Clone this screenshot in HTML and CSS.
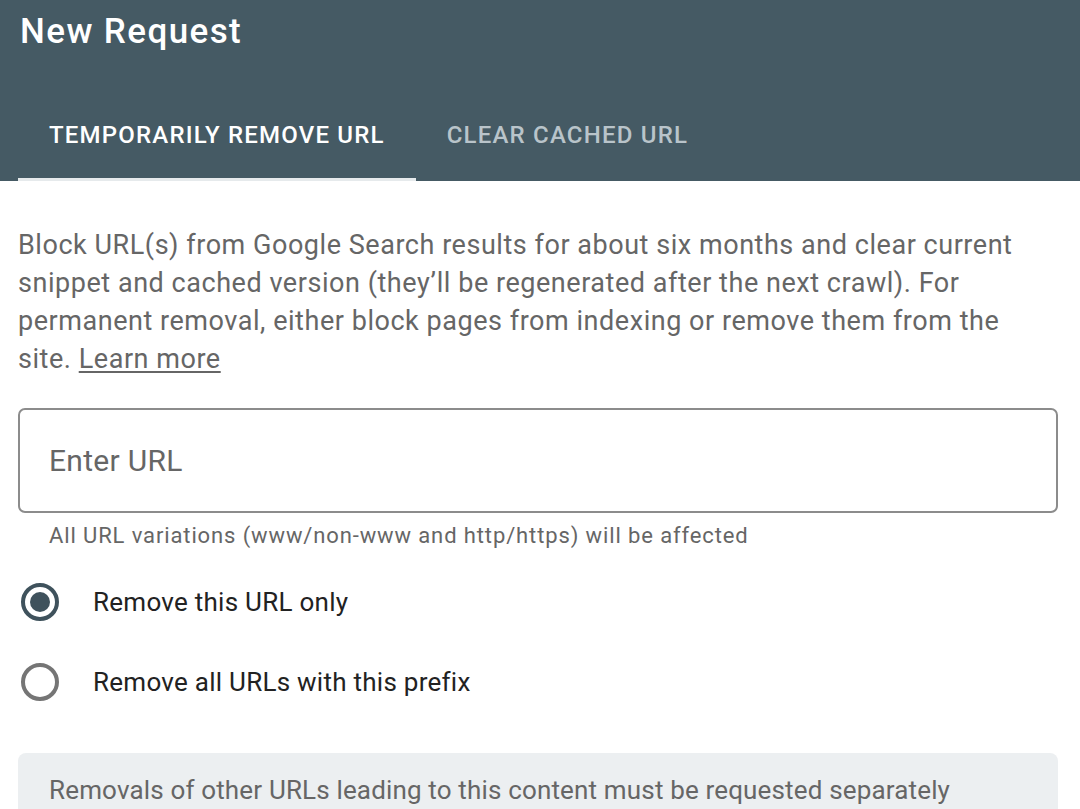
FILE: index.html
```html
<!DOCTYPE html>
<html lang="en">
<head>
  <meta charset="UTF-8" />
  <title>New Request</title>
  <meta name="viewport" content="width=device-width, initial-scale=1" />
  <link rel="stylesheet" href="styles.css">
</head>
<body>
  <!-- Header with tabs -->
  <header class="header">
    <h1 class="title">New Request</h1>
    <nav class="tabs">
      <div class="tab active">Temporarily remove URL</div>
      <div class="tab">Clear cached URL</div>
    </nav>
  </header>

  <main class="content">
    <p class="intro">
      Block URL(s) from Google Search results for about six months and clear current
      snippet and cached version (they’ll be regenerated after the next crawl). For
      permanent removal, either block pages from indexing or remove them from the
      site. <a href="#" class="link">Learn more</a>
    </p>

    <div class="field">
      <input class="url-input" type="text" placeholder="Enter URL">
    </div>
    <div class="helper">All URL variations (www/non-www and http/https) will be affected</div>

    <div class="options">
      <label class="option">
        <span class="radio checked"></span>
        <span class="option-label">Remove this URL only</span>
      </label>
      <label class="option">
        <span class="radio"></span>
        <span class="option-label">Remove all URLs with this prefix</span>
      </label>
    </div>

    <div class="notice">Removals of other URLs leading to this content must be requested separately</div>
  </main>
</body>
</html>
```

FILE: styles.css
```css
html, body {
  margin: 0; padding: 0; height: 100%; overflow: hidden;
  background: #fff; font-family: Roboto, 'Noto Sans', sans-serif;
}

.header {
  background: #455a64; color: #fff;
  padding: 0 18px;
  height: 181px; box-sizing: border-box;
  display: flex; flex-direction: column; justify-content: space-between;
}

.title {
  margin: 0; padding: 11px 0 0 2px;
  font-size: 35px; font-weight: 500; line-height: 42px;
  letter-spacing: 0.04em;
}

.tabs { display: flex; }

.tab {
  padding: 0 31px; height: 90px;
  display: flex; align-items: center;
  font-size: 24px; font-weight: 500; text-transform: uppercase;
  letter-spacing: 0.05em; color: #b9c4ca;
  box-sizing: border-box; border-bottom: 3px solid transparent;
}
.tab.active { color: #fff; border-bottom-color: #e6eaec; }

.content { padding: 0 22px 0 18px; }

.intro {
  margin: 45px 0 0; max-width: 1010px; color: #666;
  font-size: 27px; line-height: 38px; letter-spacing: 0.02em;
}
.link { color: #666; text-decoration: underline; text-underline-offset: 3px; }

.field { margin-top: 30px; }

.url-input {
  width: 100%; height: 105px; box-sizing: border-box;
  border: 2px solid #8c8c8c; border-radius: 7px;
  padding: 0 29px; font-family: inherit; font-size: 30px; color: #222;
  letter-spacing: 0.01em; outline: none;
}
.url-input::placeholder { color: #666; }

.helper {
  padding: 10px 0 0 31px; color: #666;
  font-size: 22px; letter-spacing: 0.04em; line-height: 26px;
}

.options { margin-top: 33px; display: flex; flex-direction: column; gap: 40px; }

.option { display: flex; align-items: center; gap: 34px; height: 40px; padding-left: 3px; }

.radio {
  width: 38px; height: 38px; box-sizing: border-box;
  border: 4px solid #757575; border-radius: 50%;
  display: flex; align-items: center; justify-content: center;
}
.radio.checked { border-color: #3f525c; }
.radio.checked::after {
  content: ''; width: 20px; height: 20px; border-radius: 50%; background: #3f525c;
}

.option-label { font-size: 26px; color: #222; letter-spacing: 0.01em; }

.notice {
  margin-top: 51px; background: #eceff1; border-radius: 8px;
  padding: 22px 31px; color: #666; font-size: 26px; letter-spacing: 0.16px;
}
```
